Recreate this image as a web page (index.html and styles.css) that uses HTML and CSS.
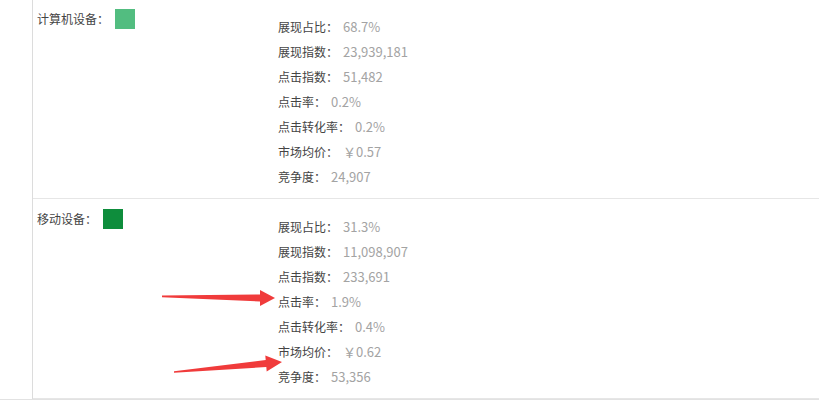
FILE: index.html
```html
<!DOCTYPE html>
<html lang="zh-CN">
<head>
    <meta charset="UTF-8">
    <meta name="viewport" content="width=device-width, initial-scale=1.0">
    <title>设备分布</title>
    <link rel="stylesheet" href="styles.css">
</head>
<body>
    <div class="page">
        <div class="panel">
            <div class="device">
                <div class="device-name">
                    <span>计算机设备：</span>
                    <i class="swatch pc"></i>
                </div>
                <ul class="stats">
                    <li><span class="k">展现占比：</span><span class="v">68.7%</span></li>
                    <li><span class="k">展现指数：</span><span class="v">23,939,181</span></li>
                    <li><span class="k">点击指数：</span><span class="v">51,482</span></li>
                    <li><span class="k">点击率：</span><span class="v">0.2%</span></li>
                    <li><span class="k">点击转化率：</span><span class="v">0.2%</span></li>
                    <li><span class="k">市场均价：</span><span class="v">￥0.57</span></li>
                    <li><span class="k">竞争度：</span><span class="v">24,907</span></li>
                </ul>
            </div>
            <div class="device">
                <div class="device-name">
                    <span>移动设备：</span>
                    <i class="swatch mobile"></i>
                </div>
                <ul class="stats">
                    <li><span class="k">展现占比：</span><span class="v">31.3%</span></li>
                    <li><span class="k">展现指数：</span><span class="v">11,098,907</span></li>
                    <li><span class="k">点击指数：</span><span class="v">233,691</span></li>
                    <li><span class="k">点击率：</span><span class="v">1.9%</span></li>
                    <li><span class="k">点击转化率：</span><span class="v">0.4%</span></li>
                    <li><span class="k">市场均价：</span><span class="v">￥0.62</span></li>
                    <li><span class="k">竞争度：</span><span class="v">53,356</span></li>
                </ul>
            </div>
        </div>
        <div class="footer-line"></div>

        <!-- annotation arrows drawn over the screenshot -->
        <svg class="marks" width="819" height="409" viewBox="0 0 819 409">
            <polygon points="162,295.6 260,294.5 260,290 275,298 260,306 260,301.5 162,297.2" />
            <polygon points="174,371.2 265.7,360 265.3,355.5 282,362 266.7,371.5 266.3,367 174,372.8" />
        </svg>
    </div>
</body>
</html>
```

FILE: styles.css
```css
body {
    margin: 0;
    background: #fff;
    font-family: "Microsoft YaHei", "Noto Sans CJK SC", sans-serif;
    font-size: 12px;
    color: #444;
    text-spacing-trim: space-all;
}

.page {
    position: relative;
    width: 819px;
    height: 409px;
    overflow: hidden;
}

.panel {
    margin: -1px 0 0 32px;
    border-left: 1px solid #dcdcdc;
}

.device {
    display: flex;
    height: 199px;
    border-bottom: 1px solid #e6e6e6;
}

.device-name {
    display: flex;
    align-items: flex-start;
    width: 241px;
    padding: 10px 0 0 4px;
    line-height: 20px;
}

.swatch {
    display: block;
    width: 20px;
    height: 20px;
    margin-left: 6px;
}

.swatch.pc {
    background: #52bd80;
}

.swatch.mobile {
    background: #0e8d3c;
}

.stats {
    list-style: none;
    margin: 0;
    padding: 15px 0 0 0;
}

.stats li {
    height: 25px;
    line-height: 25px;
    white-space: nowrap;
}

.stats .k {
    color: #444;
}

.stats .v {
    margin-left: 5px;
    color: #a3a3a3;
    font-size: 13px;
}

.footer-line {
    height: 1px;
    background: #e2e2e2;
}

.marks {
    position: absolute;
    left: 0;
    top: 0;
}

.marks polygon {
    fill: #f03b3b;
}
```
